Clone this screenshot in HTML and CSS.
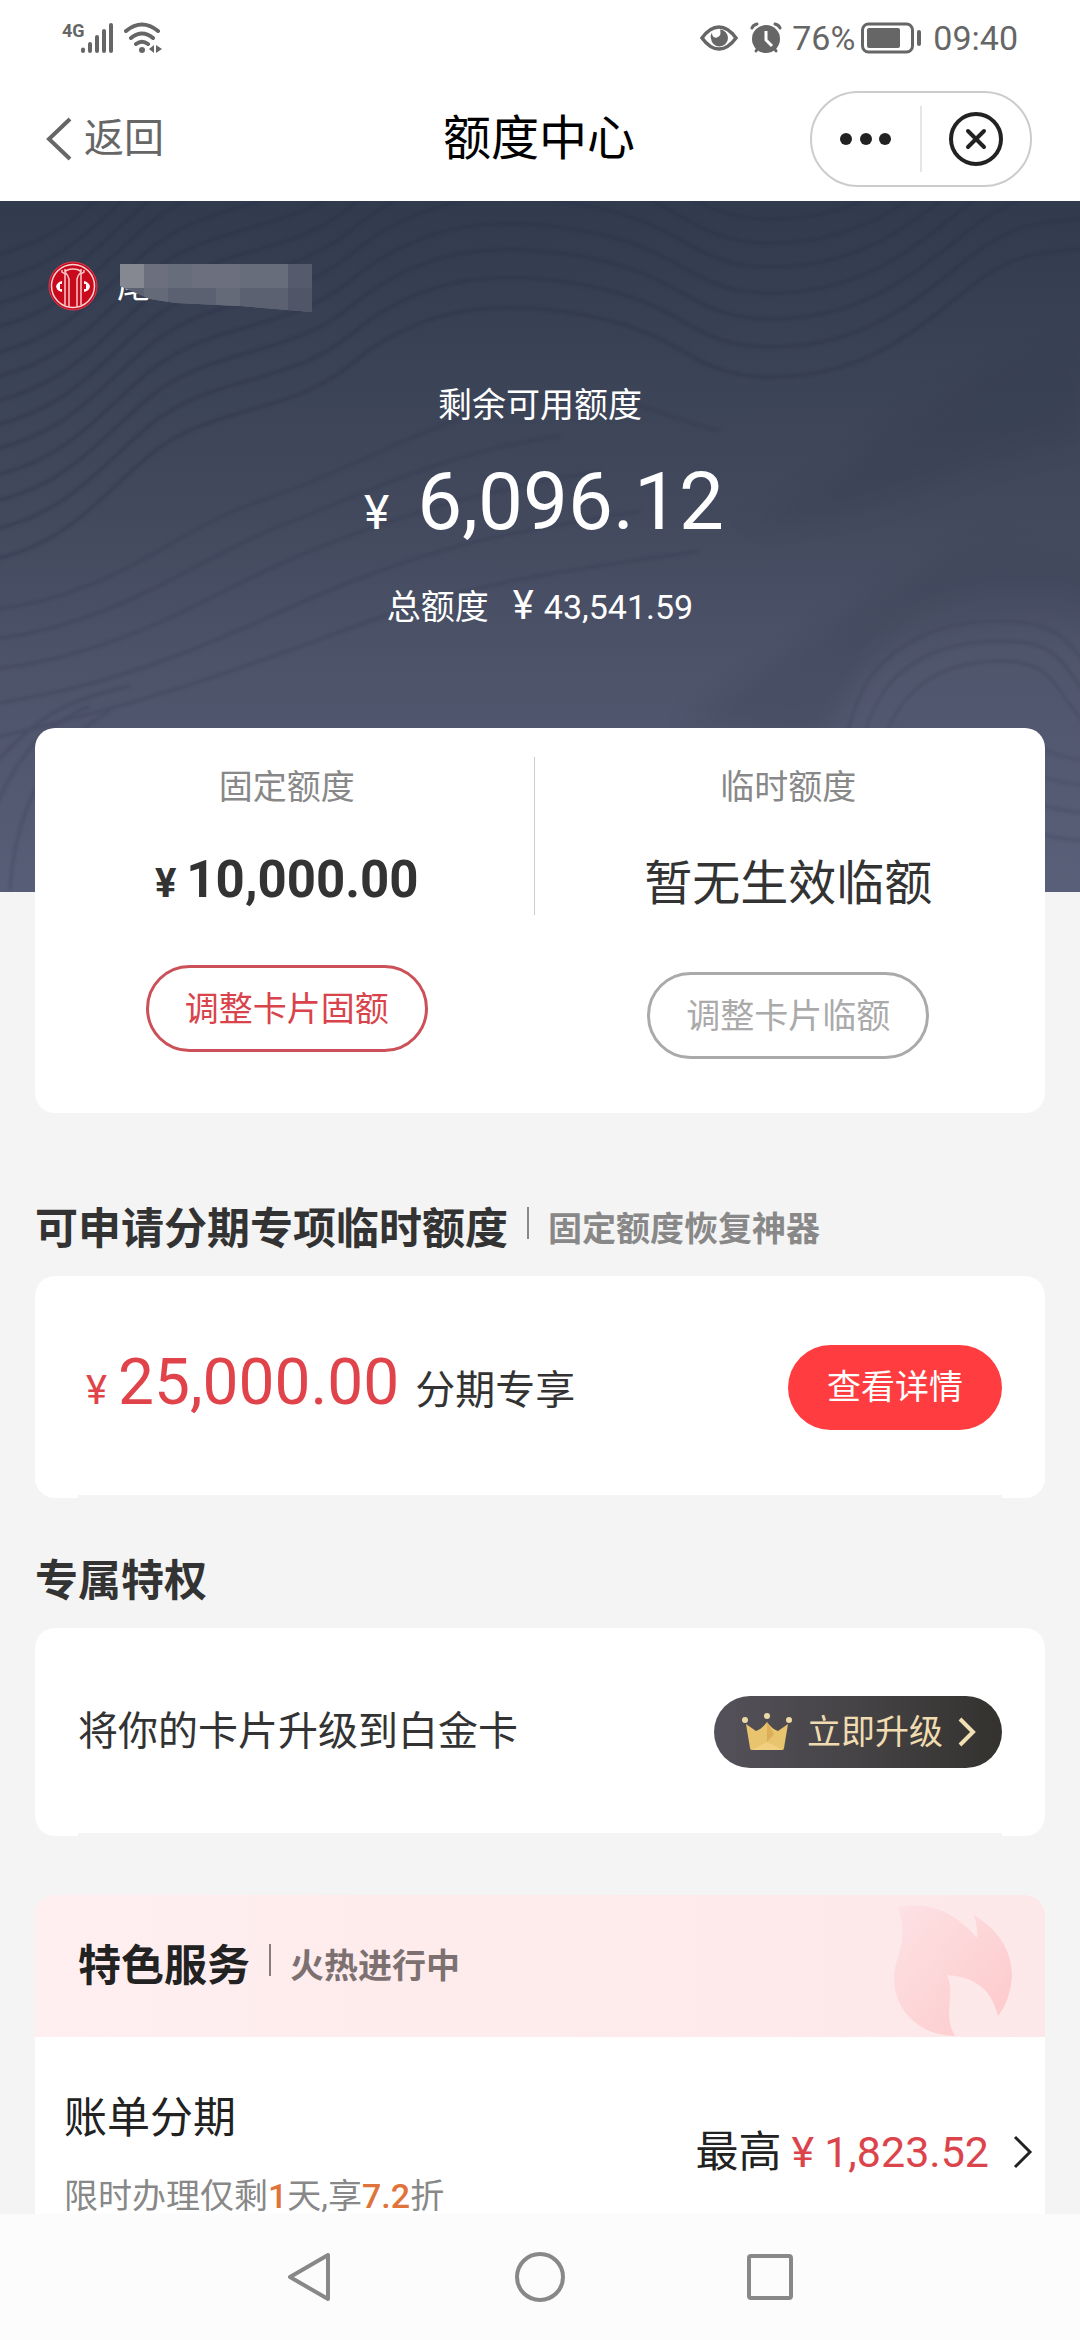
FILE: index.html
```html
<!DOCTYPE html>
<html lang="zh-CN">
<head>
<meta charset="utf-8">
<meta name="viewport" content="width=device-width, initial-scale=1">
<title>额度中心</title>
<link rel="stylesheet" href="styles.css">
</head>
<body>
<div class="status">
  <div class="status-side">
    <span class="net">4G</span>
    <svg class="signal" width="33" height="32" viewBox="0 0 33 32"><g stroke="#666" stroke-width="4" stroke-linecap="round"><path d="M2 27.500v1.500M9 22v7M16 15v14M23 9v20M30 3v26"/></g></svg>
    <svg width="38" height="32" viewBox="0 0 38 32"><g fill="none" stroke="#666" stroke-width="4" stroke-linecap="round"><path d="M2 9Q18-4 34 9M7 16Q18 7 29 16M12 22Q18 17.500 24 22"/></g><circle cx="18" cy="28" r="3" fill="#666"/><path d="M30 23v8l-5-4zM32 23v8l6-4z" fill="#666"/></svg>
  </div>
  <div class="status-side right">
    <svg width="38" height="26" viewBox="0 0 38 26"><path d="M2 13Q10 2 19 2T36 13Q28 24 19 24T2 13Z" fill="none" stroke="#666" stroke-width="3.500"/><path d="M20 4.500a8.500 8.500 0 1 1-9 9q-1-3 1-6 0 6 5 5 5-2 3-8Z" fill="#666"/></svg>
    <svg class="alarm" width="32" height="32" viewBox="0 0 32 32"><g fill="none" stroke="#666" stroke-width="3" stroke-linecap="round"><path d="M2 6q1-3 5-4M30 6q-1-3-5-4M6 29l2-3M26 29l-2-3"/></g><circle cx="16" cy="17" r="14" fill="#666"/><path d="M16 9v9l6 6" fill="none" stroke="#fff" stroke-width="3"/></svg>
    <span>76%</span>
    <svg class="battery" width="60" height="32" viewBox="0 0 60 32"><rect x="1.500" y="2" width="50" height="28" rx="6" fill="none" stroke="#666" stroke-width="3"/><rect x="6" y="6" width="33" height="20" rx="2" fill="#666"/><rect x="56" y="8" width="4" height="16" rx="2" fill="#666"/></svg>
    <span>09:40</span>
  </div>
</div>

<header class="nav">
  <button class="back" type="button"><svg width="26" height="44" viewBox="0 0 26 44"><path d="M24 2L3 22l21 20" fill="none" stroke="#666" stroke-width="4"/></svg>返回</button>
  <h1>额度中心</h1>
  <div class="capsule">
    <button type="button" aria-label="更多"><svg width="52" height="12" viewBox="0 0 52 12" fill="#222"><circle cx="6" cy="6" r="6"/><circle cx="26" cy="6" r="6"/><circle cx="45" cy="6" r="6"/></svg></button>
    <span class="capsule-line"></span>
    <button type="button" aria-label="关闭"><svg width="56" height="56" viewBox="0 0 56 56"><g fill="none" stroke="#222" stroke-width="4" stroke-linecap="round"><circle cx="28" cy="28" r="25"/><path d="M20 20l16 16M36 20L20 36"/></g></svg></button>
  </div>
</header>

<main>
  <section class="hero">
    <svg class="waves" viewBox="0 0 1080 691" preserveAspectRatio="xMidYMid slice" aria-hidden="true">
      <defs>
        <filter id="soft"><feGaussianBlur stdDeviation="1.500"/></filter>
        <filter id="haze" x="-20%" y="-20%" width="140%" height="140%"><feGaussianBlur stdDeviation="12"/></filter>
        <path id="w" d="M-40 250C60 240 90 190 150 140S290 100 350 50S480-20 585 0S690 62 770 62S900 30 960-20S1040-60 1120-70"/>
      </defs>
      <g filter="url(#haze)" fill="#2a3045" opacity=".16">
        <path d="M740 322C860 290 900 170 1080 150V240C960 260 860 330 740 322Z"/>
        <path d="M680 520C800 460 900 350 1000 345L1100 360V430C980 400 860 440 820 540Z"/>
      </g>
      <g filter="url(#soft)" fill="none" stroke="#252c44" stroke-width="3" opacity=".34">
        <use href="#w" y="-190"/><use href="#w" y="-165"/><use href="#w" y="-141"/><use href="#w" y="-118"/><use href="#w" y="-92"/><use href="#w" y="-68"/><use href="#w" y="-44"/><use href="#w" y="-20"/><use href="#w" y="4"/><use href="#w" y="30"/><use href="#w" y="56"/><use href="#w" y="84"/><use href="#w" y="114"/>
      </g>
      <g filter="url(#soft)" fill="none" stroke="#252c44" stroke-width="3" opacity=".2">
        <path d="M-20 410C110 400 170 330 260 300S430 220 520 200S640 210 720 230M-20 440C120 425 190 360 280 325S450 250 560 235M-20 470C130 455 210 390 310 350S480 290 600 270M-20 505C150 480 230 430 340 385S520 330 640 310M-20 540C160 500 260 460 370 420S560 370 700 350M-20 580C30 520 60 500 130 485M-20 640C10 570 30 530 90 505M10 690C14 620 40 550 110 510"/>
        <path d="M845 560C850 450 930 420 1000 420S1070 450 1100 480M860 560C870 470 930 440 1000 440S1060 470 1100 510M880 560C890 490 940 460 1000 460S1050 490 1100 540M1030 540Q1060 560 1100 560M1030 570Q1060 585 1100 585M1030 600Q1060 612 1100 612M1030 630Q1060 640 1100 640"/>
      </g>
      <path d="M845 560C835 500 870 400 1000 390S1070 420 1100 440V691H845Z" fill="#6a7088" opacity=".1" filter="url(#haze)"/>
    </svg>
    <div class="holder">
      <svg width="50" height="50" viewBox="0 0 50 50"><circle cx="25" cy="25" r="24" fill="#c80a1c" stroke="#d83a4c"/><circle cx="25" cy="25" r="21.500" fill="none" stroke="#f6d6d6" stroke-width="1.500"/><g fill="none" stroke="#f4c8c8" stroke-width="1.500"><path d="M14 9v2l3 2v31M21 46V18q-1-4-4-7V8M36 9v2l-3 2v31M29 46V18q1-4 4-7V8M17 11q2-3 8-3t8 3"/></g><path d="M14 20v3h-2v5h2v3q-5-1-6-5.500Q9 21 14 20ZM36 20v3h2v5h-2v3q5-1 6-5.500Q41 21 36 20Z" fill="#fff"/></svg>
      <div class="holder-name">尾号
        <svg class="mosaic" width="192" height="48" viewBox="0 0 192 48" aria-hidden="true"><clipPath id="m"><path d="M0 0h192v48l-72-6-64-3-26-4L0 22Z"/></clipPath><g clip-path="url(#m)"><path fill="#686d7c" d="M0 0h192v48H0z"/><path fill="#858791" d="M0 0h24v24H0z"/><path fill="#6c707e" d="M24 0h24v24H24zM72 0h48v24H72z"/><path fill="#5c6172" d="M0 24h168v24H0z"/><path fill="#656a79" d="M24 24h24v24H24zM96 24h24v24H96z"/><path fill="#555b6c" d="M168 0h24v24h-24z"/><path fill="#505668" d="M168 24h24v24h-24z"/></g></svg>
      </div>
    </div>
    <p class="hero-label">剩余可用额度</p>
    <p class="hero-amount"><span class="yen">¥</span><span>6,096.12</span></p>
    <p class="hero-total">总额度<span class="yen">¥</span><span>43,541.59</span></p>
  </section>

  <div class="content">
    <section class="card limits">
      <div class="limit">
        <h2>固定额度</h2>
        <p class="limit-amount"><span class="yen">¥</span>10,000.00</p>
        <button class="outline" type="button">调整卡片固额</button>
      </div>
      <span class="limits-line"></span>
      <div class="limit">
        <h2>临时额度</h2>
        <p class="limit-none">暂无生效临额</p>
        <button class="outline muted" type="button">调整卡片临额</button>
      </div>
    </section>

    <div class="heading first"><h2>可申请分期专项临时额度</h2><span class="bar"></span><span class="note">固定额度恢复神器</span></div>
    <section class="card offer">
      <p class="offer-text"><span class="yen">¥</span><span class="offer-amount">25,000.00</span>分期专享</p>
      <button class="primary" type="button">查看详情</button>
    </section>

    <div class="heading"><h2>专属特权</h2></div>
    <section class="card offer upgrade">
      <p class="offer-text">将你的卡片升级到白金卡</p>
      <button class="dark" type="button">
        <svg width="50" height="40" viewBox="0 0 50 40"><path d="M4 12l10 7q6-2 11-9 5 7 11 9l10-7-4 24q0 2-2 2H10q-2 0-2-2Z" fill="#e9c46e"/><path d="M25 10l7 12-7 8Z" fill="#dcae58"/><path d="M25 30l16 8H10Z" fill="#f0d080"/><g fill="#ecd9a8"><circle cx="3" cy="8" r="3"/><circle cx="25" cy="4" r="3"/><circle cx="47" cy="8" r="3"/></g></svg>
        <span>立即升级</span>
        <svg width="18" height="30" viewBox="0 0 18 30"><path d="M2 2l13 13L2 28" fill="none" stroke="#f2dfb4" stroke-width="4"/></svg>
      </button>
    </section>

    <section class="service">
      <div class="service-head">
        <h2>特色服务</h2><span class="bar"></span><span class="note">火热进行中</span>
        <svg class="flame" width="118" height="132" viewBox="0 0 118 132" aria-hidden="true"><defs><linearGradient id="f" x1="0" y1="0" x2="1" y2="1"><stop offset="0" stop-color="#fde2e4"/><stop offset=".4" stop-color="#fdd8da"/><stop offset="1" stop-color="#fdc8ca"/></linearGradient></defs><path d="M4 2C30-3 58 3 83 33Q84 21 80 10C109 28 118 50 118 72Q116 96 104 111C98 86 83 72 53 70C62 92 48 110 61 131C20 130 0 100 0 74C0 50 16 40 4 2Z" fill="url(#f)"/></svg>
      </div>
      <a class="service-row" href="#">
        <span class="service-main"><span class="service-name">账单分期</span><span class="service-sub">限时办理仅剩<b>1</b>天,享<b>7.2</b>折</span></span>
        <span class="service-max">最高<span class="service-price"><span>¥</span><span>1,823.52</span></span>
          <svg width="20" height="34" viewBox="0 0 20 34"><path d="M2 2l15 15L2 32" fill="none" stroke="#222" stroke-width="3"/></svg></span>
      </a>
    </section>
  </div>
</main>

<nav class="keys">
  <button type="button" aria-label="返回键"><svg width="52" height="52" viewBox="0 0 52 52"><path d="M6 26L44 4v44Z" fill="none" stroke="#888" stroke-width="4" stroke-linejoin="round"/></svg></button>
  <button type="button" aria-label="主屏幕"><svg width="52" height="52" viewBox="0 0 52 52"><circle cx="26" cy="26" r="23" fill="none" stroke="#888" stroke-width="4"/></svg></button>
  <button type="button" aria-label="最近任务"><svg width="52" height="52" viewBox="0 0 52 52"><rect x="5" y="5" width="42" height="42" rx="2" fill="none" stroke="#888" stroke-width="4"/></svg></button>
</nav>
</body>
</html>
```
FILE: styles.css
```css
* { box-sizing: border-box; }

body {
  margin: 0;
  background: #f4f4f4;
  color: #333;
  font-family: Roboto, "Noto Sans CJK SC", sans-serif;
}

h1, h2, p { margin: 0; font-weight: 400; }
svg { display: block; flex: none; }
button { margin: 0; padding: 0; border: 0; background: none; font: inherit; color: inherit; }
.yen { line-height: 1; }

/* System status bar */
.status {
  display: flex;
  justify-content: space-between;
  align-items: center;
  height: 76px;
  padding: 0 62px;
  background: #fff;
  color: #666;
  font-size: 34px;
  line-height: 40px;
}
.status-side { display: flex; align-items: center; }
.net { align-self: flex-start; font-size: 18px; line-height: 18px; font-weight: 700; }
.signal { margin: 0 10px 0 -4px; }
.alarm { margin: 0 10px 0 12px; }
.battery { margin: 0 12px 0 6px; }

/* Title bar */
.nav {
  display: grid;
  grid-template-columns: 1fr auto 1fr;
  align-items: center;
  height: 125px;
  padding: 0 48px 0 46px;
  background: #fff;
}
.back { display: flex; align-items: center; gap: 12px; justify-self: start; color: #666; font-size: 40px; line-height: 48px; }
.nav h1 { color: #000; font-size: 48px; line-height: 56px; }
.capsule {
  display: grid;
  grid-template-columns: 1fr 2px 1fr;
  align-items: center;
  justify-self: end;
  width: 222px;
  height: 96px;
  border: 2px solid #ccc;
  border-radius: 48px;
}
.capsule button { display: flex; justify-content: center; }
.capsule-line { height: 66px; background: #e6e6e6; }

/* Available limit */
.hero {
  position: relative;
  padding: 60px 48px 261px;
  background: linear-gradient(#323b4e, #42495d 45%, #4c5268 65%, #585e77);
  color: #fff;
  font-size: 34px;
  line-height: 48px;
  text-align: center;
}
.waves { position: absolute; inset: 0; width: 100%; height: 100%; }
.hero > :not(.waves) { position: relative; }
.holder { display: flex; align-items: center; gap: 19px; height: 49px; }
.holder-name { position: relative; }
.mosaic { position: absolute; left: 3px; top: 2px; }
.hero-label { margin-top: 71px; }
.hero-amount { display: flex; justify-content: center; align-items: baseline; gap: 28px; margin-top: 25px; padding-left: 8px; font-size: 80px; line-height: 96px; }
.hero-amount .yen { font-size: 48px; }
.hero-total { display: flex; justify-content: center; align-items: baseline; gap: 10px; margin-top: 33px; }
.hero-total .yen { margin-left: 14px; font-size: 40px; }

.content { padding: 0 35px; }
.card { border-radius: 20px; background: #fff; }

/* Fixed and temporary limits */
.limits {
  position: relative;
  display: grid;
  grid-template-columns: 49fr 1px 50fr;
  margin-top: -164px;
  padding: 35px 4px 54px;
}
.limits-line { height: 158px; margin-top: -6px; background: #ccc; }
.limit { display: flex; flex-direction: column; align-items: center; }
.limit h2 { margin-bottom: 37px; color: #888; font-size: 34px; line-height: 48px; }
.limit-amount { display: flex; align-items: baseline; gap: 10px; margin-bottom: 53px; font-size: 51px; line-height: 64px; font-weight: 700; }
.limit-amount .yen { font-size: 40px; }
.limit-none { margin-bottom: 52px; font-size: 48px; line-height: 72px; }
.outline {
  height: 87px;
  padding: 0 36px;
  border: 3px solid #cc5058;
  border-radius: 44px;
  color: #d9434b;
  font-size: 34px;
  line-height: 48px;
}
.outline.muted { border-color: #aaa; color: #aaa; }

/* Section headings */
.heading, .service-head { display: flex; align-items: center; gap: 19px; }
.heading { margin: 55px 0 19px; }
.heading.first { margin-top: 88px; }
.heading h2, .service-head h2 { font-size: 43px; line-height: 56px; font-weight: 700; }
.bar { width: 2px; height: 32px; margin-bottom: 12px; background: #888; }
.note { color: #888; font-size: 34px; line-height: 48px; font-weight: 700; }

/* Offer cards, with the hairline that closes each of them */
.offer {
  display: flex;
  align-items: center;
  justify-content: space-between;
  height: 222px;
  padding: 0 43px;
  background: linear-gradient(#f4f4f4, #f4f4f4) center bottom / calc(100% - 86px) 3px no-repeat, #fff;
}
.upgrade { height: 208px; }
.offer-text { display: flex; align-items: baseline; font-size: 40px; line-height: 64px; }
.offer-text .yen { margin: 0 11px 0 8px; color: #e0434a; }
.offer-amount { margin-right: 16px; color: #e0434a; font-size: 64px; }
.primary { height: 85px; padding: 0 39px; border-radius: 43px; background: #ff3c3f; color: #fff; font-size: 34px; line-height: 48px; }
.dark {
  display: flex;
  align-items: center;
  gap: 15px;
  height: 72px;
  padding: 0 26px 0 28px;
  border-radius: 36px;
  background: linear-gradient(90deg, #54515a, #454345 50%, #33322f);
  color: #f0dcb0;
  font-size: 34px;
  line-height: 48px;
}

/* Featured services */
.service { margin-top: 59px; border-radius: 20px 20px 0 0; background: #fff; }
.service-head {
  position: relative;
  height: 142px;
  padding: 0 43px;
  border-radius: 20px 20px 0 0;
  background: linear-gradient(90deg, #ffeff0, #feebec 50%, #fce8e8);
}
.service-head h2 { color: #222; }
.service-head .bar { background: #8a7c7c; }
.service-head .note { color: #7d7071; }
.flame { position: absolute; right: 33px; bottom: 0; }
.service-row { display: flex; justify-content: space-between; align-items: center; padding: 53px 12px 0 29px; color: #222; text-decoration: none; }
.service-main { display: flex; flex-direction: column; gap: 32px; }
.service-name { font-size: 43px; line-height: 56px; }
.service-sub { color: #888; font-size: 34px; line-height: 36px; }
.service-sub b { color: #e0733a; font-weight: 500; }
.service-max { display: flex; align-items: center; gap: 10px; font-size: 43px; line-height: 56px; }
.service-price { display: flex; gap: 10px; margin-right: 14px; color: #dc444c; }

/* System navigation keys */
.keys { display: flex; justify-content: center; align-items: center; gap: 178px; height: 126px; background: #fcfcfc; }
```
